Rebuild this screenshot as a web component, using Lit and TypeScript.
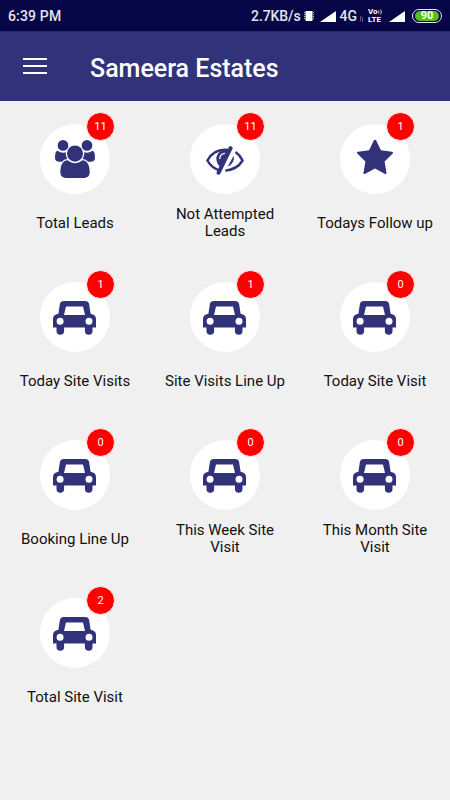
import { LitElement, html, css, svg } from "lit";
import { customElement } from "lit/decorators.js";

const users = svg`<svg class="users" viewBox="0 0 1920 1792" preserveAspectRatio="none"><path d="M593 896q-162 5-265 128h-134q-82 0-138-40.5t-56-118.5q0-353 124-353 6 0 43.5 21t97.5 42.5 119 21.5q67 0 133-23-5 37-5 66 0 139 81 256zm1071 637q0 120-73 189.5t-194 69.5h-874q-121 0-194-69.5t-73-189.5q0-53 3.5-103.5t14-109 26.5-108.5 43-97.5 62-81 85.5-53.5 111.5-20q10 0 43 21.5t73 48 107 48 135 21.5 135-21.5 107-48 73-48 43-21.5q61 0 111.5 20t85.5 53.5 62 81 43 97.5 26.5 108.5 14 109 3.5 103.5zm-1024-1277q0 106-75 181t-181 75-181-75-75-181 75-181 181-75 181 75 75 181zm704 384q0 159-112.5 271.5t-271.5 112.5-271.5-112.5-112.5-271.5 112.5-271.5 271.5-112.5 271.5 112.5 112.5 271.5zm576 225q0 78-56 118.5t-138 40.5h-134q-103-123-265-128 81-117 81-256 0-29-5-66 66 23 133 23 59 0 119-21.5t97.5-42.5 43.5-21q124 0 124 353zm-128-609q0 106-75 181t-181 75-181-75-75-181 75-181 181-75 181 75 75 181z"/></svg>`;
const eye = svg`<svg class="eye" viewBox="0 0 38 29">
  <path d="M22 4Q8 2.500 1.400 14.500Q6 22.500 14 24.500" fill="none" stroke="#32327b" stroke-width="2.500"/>
  <path d="M22 3.500Q11.500 4 10.300 11.500Q10 17 14.500 21.500Z"/>
  <path d="M13.800 12.500Q14 8.300 18.500 7.300" fill="none" stroke="#fff" stroke-width="1.300" stroke-linecap="round"/>
  <path d="M24.600 2.200L12.600 26.700" stroke="#32327b" stroke-width="4" stroke-linecap="round"/>
  <path d="M29.500 6Q34 9 36.600 14.500Q31 23.600 19.300 24.600" fill="none" stroke="#32327b" stroke-width="2.400"/>
  <path d="M27.700 9.800Q29.200 17 21.600 20.800Z"/>
</svg>`;
const star = svg`<svg class="star" viewBox="64 60 1664 1560" preserveAspectRatio="none"><path d="M1728 647q0 22-26 48l-363 354 86 500q1 7 1 20 0 21-10.500 35.500t-30.500 14.500q-19 0-40-12l-449-236-449 236q-22 12-40 12-21 0-31.500-14.500t-10.500-35.500q0-6 2-20l86-500-364-354q-25-27-25-48 0-37 56-46l502-73 225-455q19-41 49-41t49 41l225 455 502 73q56 9 56 46z"/></svg>`;
const car = svg`<svg class="car" viewBox="0 0 43 34">
  <path fill-rule="evenodd" d="M11 0H32Q35.500 0 36.100 3L37.600 12.700Q43 13.600 43 18V26.600H39.500V30Q39.500 33.800 35.700 33.800T31.900 30V26.600H11.100V30Q11.100 33.800 7.300 33.800T3.500 30V26.600H0V18Q0 13.600 5.400 12.700L6.900 3Q7.500 0 11 0ZM13 5.500L11 14H32L30 5.500ZM3.600 20.200a3.500 3.500 0 1 0 7 0a3.500 3.500 0 1 0-7 0ZM32.500 20.200a3.500 3.500 0 1 0 7 0a3.500 3.500 0 1 0-7 0Z"/>
</svg>`;

const tiles = [
  { icon: users, count: 11, label: "Total Leads" },
  { icon: eye, count: 11, label: "Not Attempted Leads" },
  { icon: star, count: 1, label: "Todays Follow up" },
  { icon: car, count: 1, label: "Today Site Visits" },
  { icon: car, count: 1, label: "Site Visits Line Up" },
  { icon: car, count: 0, label: "Today Site Visit" },
  { icon: car, count: 0, label: "Booking Line Up" },
  { icon: car, count: 0, label: "This Week Site Visit" },
  { icon: car, count: 0, label: "This Month Site Visit" },
  { icon: car, count: 2, label: "Total Site Visit" },
];

@customElement("app-root")
export class AppRoot extends LitElement {
  static styles = css`
    :host {
      display: flex;
      flex-direction: column;
      height: 800px;
      background: #f0f0f0;
      font-family: Roboto, "Liberation Sans", sans-serif;
      overflow: hidden;
    }
    * { box-sizing: border-box; }
    svg { display: block; flex: none; }
    .status {
      display: flex;
      align-items: center;
      justify-content: space-between;
      flex: none;
      height: 31px;
      padding: 1px 8px 0;
      background: #060545;
      color: #e4e4ee;
      font-size: 14px;
      font-weight: 500;
      line-height: 20px;
    }
    .time { letter-spacing: 0.15px; }
    .right { display: flex; align-items: center; }
    .speed { letter-spacing: -0.1px; }
    .vibrate { margin-left: 2px; }
    .signal { margin-left: 5px; }
    .net { margin-left: 4px; }
    .arrows { margin: 5px 0 0 2px; }
    .volte {
      display: flex;
      flex-direction: column;
      margin-left: 4px;
      width: 15px;
      font-size: 8px;
      font-weight: 700;
      line-height: 8px;
      color: #fff;
    }
    .vo { display: flex; align-items: center; }
    .signal2 { margin-left: 6px; }
    .battery {
      display: flex;
      width: 30px;
      height: 14px;
      margin-left: 7px;
      padding: 1px;
      border: 1px solid #e8e8f4;
      border-radius: 7px;
    }
    .charge {
      display: flex;
      align-items: center;
      justify-content: center;
      width: 24px;
      margin-left: 1px;
      border-radius: 5px;
      background: #55c219;
      color: #fff;
      font-size: 11px;
      font-weight: 700;
      line-height: 10px;
    }
    .header {
      display: flex;
      align-items: center;
      flex: none;
      height: 70px;
      padding: 3px 23px 0;
      background: #32327b;
      border-top: 1px solid #28286d;
      color: #fff;
    }
    .menu { margin-bottom: 5px; }
    h1 {
      margin: 1px 0 0 43px;
      font-size: 25px;
      font-weight: 500;
      line-height: 32px;
      white-space: nowrap;
    }
    .grid {
      display: grid;
      grid-template-columns: repeat(3, 150px);
      grid-auto-rows: 158px;
    }
    .tile {
      display: flex;
      flex-direction: column;
      align-items: center;
      padding-top: 23px;
    }
    .disc {
      position: relative;
      display: flex;
      align-items: center;
      justify-content: center;
      flex: none;
      width: 70px;
      height: 70px;
      border-radius: 50%;
      background: #fff;
      fill: #32327b;
    }
    .badge {
      position: absolute;
      top: -12px;
      right: -5px;
      display: flex;
      align-items: center;
      justify-content: center;
      width: 29px;
      height: 29px;
      border: 1px solid #fbf5f5;
      border-radius: 50%;
      background: #f00;
      color: #fff;
      font-size: 11px;
      line-height: 14px;
    }
    .users { width: 40px; height: 38px; }
    .eye { width: 38px; height: 29px; margin-top: 2px; }
    .star { width: 36px; height: 34px; margin-bottom: 4px; }
    .car { width: 43px; height: 34px; margin: 1px 1px 0 0; }
    .label {
      display: flex;
      align-items: center;
      justify-content: center;
      height: 38.8px;
      width: 126px;
      margin-top: 10px;
      color: #111;
      font-size: 15px;
      line-height: 17.5px;
      text-align: center;
      padding: 0 2px;
    }
  `;

  render() {
    return html`
      <div class="status">
        <span class="time">6:39 PM</span>
        <div class="right">
          <span class="speed">2.7KB/s</span>
          <svg class="vibrate" width="12" height="12" viewBox="0 0 12 12">
            <rect x="2.500" y="1" width="7" height="10" fill="#fff" />
            <path d="M1.500 2v8M10.500 2v8" stroke="#c8c8dc" stroke-dasharray="1 1" />
          </svg>
          <svg class="signal" width="16" height="11" viewBox="0 0 16 11"><path d="M0 11L16 0V11Z" fill="#fff" /></svg>
          <span class="net">4G</span>
          <svg class="arrows" width="5" height="6" viewBox="0 0 5 6">
            <path d="M1.500 0v5M3.500 1v5" stroke="#77779b" stroke-width=".8" />
          </svg>
          <div class="volte">
            <span class="vo">Vo<svg width="5" height="6" viewBox="0 0 5 6"><path d="M.5 1.500Q1.500 3 .5 4.500M2.500.5Q4.500 3 2.500 5.500" fill="none" stroke="#fff" stroke-width=".8" /></svg></span>
            <span>LTE</span>
          </div>
          <svg class="signal2" width="16" height="11" viewBox="0 0 16 11"><path d="M0 11L16 0V11Z" fill="#fff" /></svg>
          <div class="battery"><span class="charge">90</span></div>
        </div>
      </div>
      <div class="header">
        <svg class="menu" width="24" height="18" viewBox="0 0 24 18">
          <path d="M0 2H24M0 9H24M0 16H24" stroke="#fff" stroke-width="2.200" />
        </svg>
        <h1>Sameera Estates</h1>
      </div>
      <div class="grid">
        ${tiles.map(
          (t) => html`<div class="tile">
            <div class="disc">${t.icon}<span class="badge">${t.count}</span></div>
            <div class="label">${t.label}</div>
          </div>`
        )}
      </div>
    `;
  }
}
